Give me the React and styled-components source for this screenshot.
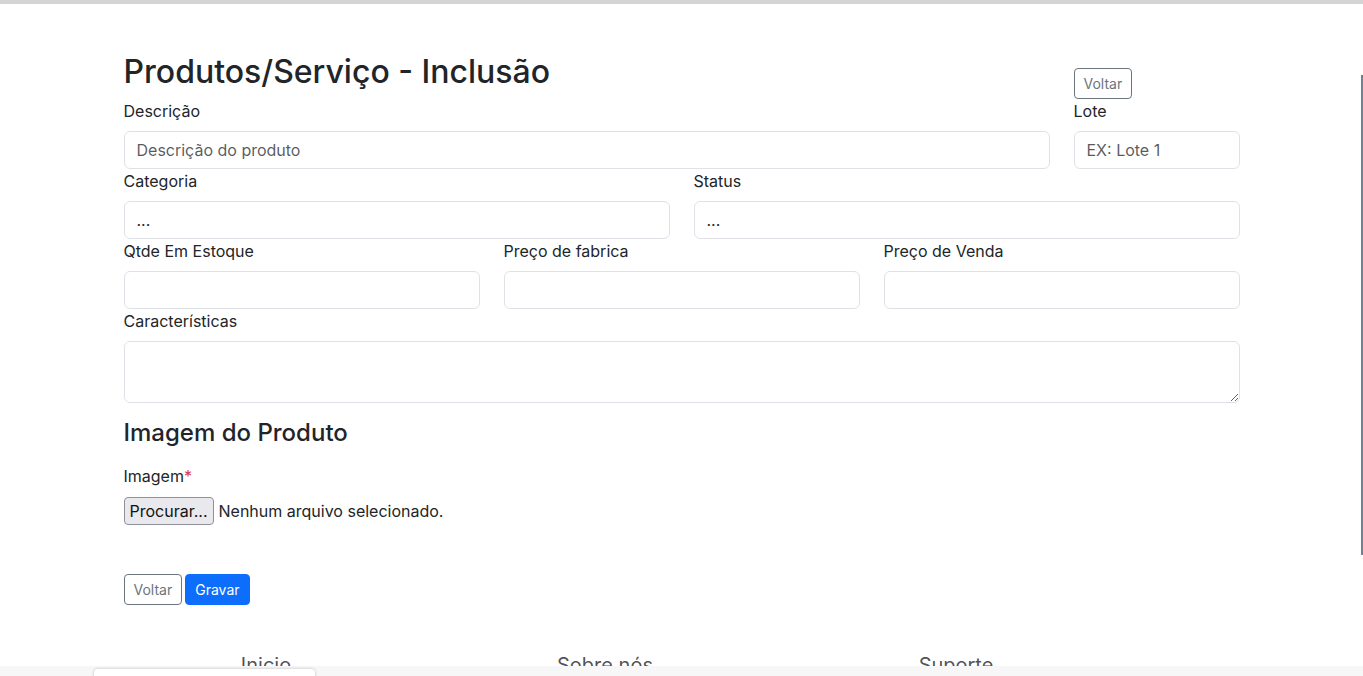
import styled, { createGlobalStyle } from "styled-components";

const GlobalStyle = createGlobalStyle`
  * { box-sizing: border-box; }
  body {
    margin: 0;
    background: #fff;
    color: #212529;
    font-family: Inter, "Noto Sans", "Liberation Sans", sans-serif;
    font-size: 16px;
    line-height: 1.5;
  }
`;

const TopBar = styled.div`
  height: 4px;
  background: #d4d4d4;
`;

const Container = styled.main`
  max-width: 1140px;
  margin: 0 auto;
  padding: 49px 12px 0;
`;

const Row = styled.div`
  display: grid;
  grid-template-columns: ${(p) => p.$cols};
  column-gap: 24px;
  align-items: ${(p) => p.$align || "stretch"};
`;

const Title = styled.h2`
  margin: 0 0 8px;
  font-size: 32px;
  font-weight: 500;
  line-height: 1.2;
`;

const SubTitle = styled.h4`
  margin: 16px 0 16px;
  font-size: 24px;
  font-weight: 500;
  line-height: 1.2;
`;

const Button = styled.button`
  font-family: inherit;
  font-size: 14px;
  line-height: 21px;
  padding: 4px 9px;
  border-radius: 4px;
  cursor: pointer;
  border: 1px solid ${(p) => (p.$primary ? "#0d6efd" : "#6c757d")};
  background: ${(p) => (p.$primary ? "#0d6efd" : "#fff")};
  color: ${(p) => (p.$primary ? "#fff" : "#6c757d")};
`;

const HeaderAction = styled.div`
  display: flex;
  align-items: flex-end;
`;

const Field = styled.div`
  display: flex;
  flex-direction: column;
`;

const Label = styled.label`
  display: block;
  margin-bottom: 8px;
  line-height: 24px;
`;

const Required = styled.span`
  color: #dc3545;
`;

const Input = styled.input`
  width: 100%;
  height: 38px;
  padding: 6px 12px;
  font-family: inherit;
  font-size: 16px;
  color: #212529;
  border: 1px solid #dee2e6;
  border-radius: 6px;
  background: #fff;
  &::placeholder { color: rgba(33, 37, 41, 0.75); }
`;

const Select = styled.select`
  width: 100%;
  height: 38px;
  padding: 6px 12px;
  font-family: inherit;
  font-size: 16px;
  color: #212529;
  border: 1px solid #dee2e6;
  border-radius: 6px;
  background: #fff;
  appearance: none;
`;

const TextArea = styled.textarea`
  width: 100%;
  height: 62px;
  padding: 6px 12px;
  font-family: inherit;
  font-size: 16px;
  border: 1px solid #dee2e6;
  border-radius: 6px;
  display: block;
`;

const FileRow = styled.div`
  display: flex;
  align-items: center;
  gap: 5px;
  height: 30px;
`;

const FileButton = styled.span`
  display: inline-block;
  padding: 1px 5px;
  line-height: 24px;
  font-size: 16px;
  background: #e9e9ed;
  border: 1px solid #8f8f9d;
  border-radius: 4px;
  color: #111;
`;

const Actions = styled.div`
  margin-top: 48px;
  display: flex;
  gap: 3px;
`;

const Footer = styled.footer`
  margin-top: 45px;
  display: grid;
  grid-template-columns: 344px 334px 368px;
  margin-left: 94px;
`;

const FooterLink = styled.a`
  text-align: center;
  color: rgba(33, 37, 41, 0.8);
  text-decoration: none;
  font-size: 20px;
  line-height: 30px;
`;

const BottomBar = styled.div`
  position: fixed;
  left: 0;
  right: 0;
  bottom: 0;
  height: 10px;
  background: #f7f7f7;
`;

const BottomTab = styled.div`
  position: absolute;
  left: 94px;
  top: 3px;
  width: 221px;
  height: 20px;
  background: #fff;
  border-radius: 4px 4px 0 0;
  box-shadow: 0 0 3px rgba(0, 0, 0, 0.25);
`;

const ScrollThumb = styled.div`
  position: fixed;
  top: 75px;
  left: 1361px;
  width: 2px;
  height: 480px;
  background: #6e7f96;
`;

export default function App() {
  return (
    <>
      <GlobalStyle />
      <TopBar />
      <Container>
        <Row $cols="926fr 166fr" $align="end">
          <Title>Produtos/Serviço - Inclusão</Title>
          <HeaderAction>
            <Button>Voltar</Button>
          </HeaderAction>
        </Row>

        <Row $cols="926fr 166fr">
          <Field>
            <Label>Descrição</Label>
            <Input placeholder="Descrição do produto" />
          </Field>
          <Field>
            <Label>Lote</Label>
            <Input placeholder="EX: Lote 1" />
          </Field>
        </Row>

        <Row $cols="1fr 1fr">
          <Field>
            <Label>Categoria</Label>
            <Select defaultValue="">
              <option value="">...</option>
            </Select>
          </Field>
          <Field>
            <Label>Status</Label>
            <Select defaultValue="">
              <option value="">...</option>
            </Select>
          </Field>
        </Row>

        <Row $cols="1fr 1fr 1fr">
          <Field>
            <Label>Qtde Em Estoque</Label>
            <Input />
          </Field>
          <Field>
            <Label>Preço de fabrica</Label>
            <Input />
          </Field>
          <Field>
            <Label>Preço de Venda</Label>
            <Input />
          </Field>
        </Row>

        <Field>
          <Label>Características</Label>
          <TextArea rows={2} />
        </Field>

        <SubTitle>Imagem do Produto</SubTitle>
        <Label>
          Imagem<Required>*</Required>
        </Label>
        <FileRow>
          <FileButton>Procurar...</FileButton>
          <span>Nenhum arquivo selecionado.</span>
        </FileRow>

        <Actions>
          <Button>Voltar</Button>
          <Button $primary>Gravar</Button>
        </Actions>
      </Container>

      <Footer>
        <FooterLink href="#">Inicio</FooterLink>
        <FooterLink href="#">Sobre nós</FooterLink>
        <FooterLink href="#">Suporte</FooterLink>
      </Footer>

      <BottomBar>
        <BottomTab />
      </BottomBar>
      <ScrollThumb />
    </>
  );
}
